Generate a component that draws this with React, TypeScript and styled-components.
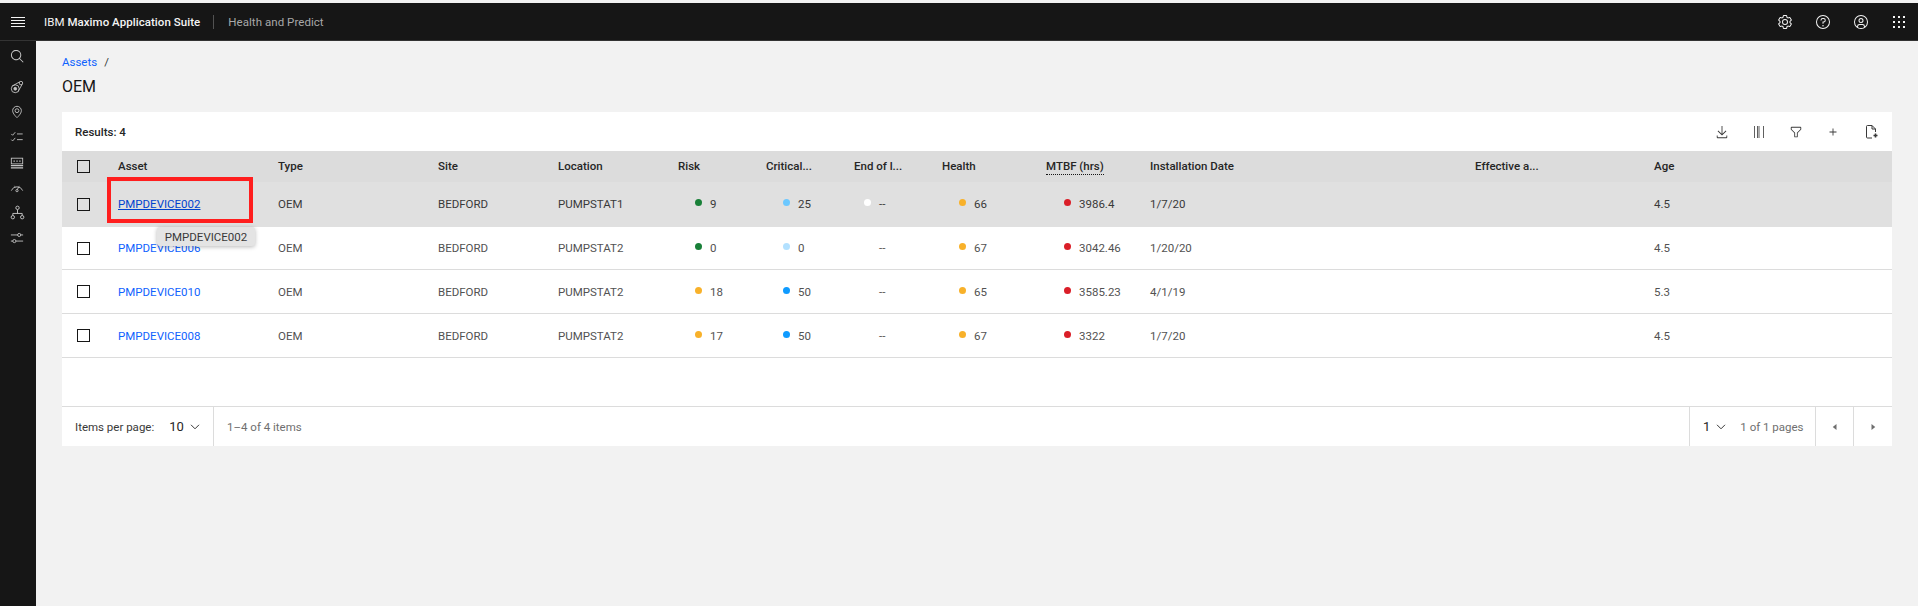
import React from "react";
import styled, { createGlobalStyle } from "styled-components";

const GlobalStyle = createGlobalStyle`
  html, body {
    margin: 0;
    padding: 0;
    background: #f2f2f2;
    font-family: Roboto, "Liberation Sans", sans-serif;
    font-size: 11.5px;
    color: #161616;
    overflow: hidden;
  }
`;

const COLUMNS = "56px 160px 160px 120px 120px 88px 88px 88px 104px 104px 325px 179px 238px";

const Page = styled.div`
  width: 1918px;
  height: 606px;
  display: flex;
  flex-direction: column;
  padding-top: 3px;
  box-sizing: border-box;
  background: #f2f2f2;
  overflow: hidden;
`;

const Header = styled.header`
  height: 38px;
  flex: none;
  display: flex;
  align-items: center;
  background: #161616;
  border-bottom: 1px solid #333;
  box-sizing: border-box;
  color: #f4f4f4;
`;

const MenuButton = styled.button`
  width: 36px;
  height: 36px;
  padding: 0;
  margin-right: 8px;
  display: flex;
  align-items: center;
  justify-content: center;
  background: none;
  border: 0;
  color: #f4f4f4;
`;

const Brand = styled.div`
  color: #f4f4f4;
  font-weight: 400;
  letter-spacing: 0.05px;
  padding-right: 13px;
  border-right: 1px solid #525252;
  line-height: 14px;

  b {
    font-weight: 500;
  }
`;

const Product = styled.div`
  margin-left: 14px;
  letter-spacing: 0.05px;
  color: #a8a8a8;
`;

const HeaderIcons = styled.div`
  margin-left: auto;
  display: grid;
  grid-template-columns: repeat(4, 38px);
`;

const HeaderIcon = styled.div`
  height: 36px;
  display: flex;
  align-items: center;
  justify-content: center;
  color: #f4f4f4;
`;

const Body = styled.div`
  flex: 1;
  display: flex;
  min-height: 0;
`;

const Rail = styled.nav`
  width: 36px;
  flex: none;
  background: #161616;
  display: flex;
  flex-direction: column;
  align-items: center;
  padding-top: 3.4px;
  box-sizing: border-box;
`;

const RailItem = styled.div`
  width: 36px;
  height: 25.2px;
  display: flex;
  align-items: center;
  justify-content: center;
  padding-right: 2px;
  box-sizing: border-box;
  color: #c6c6c6;

  &:first-child {
    margin-bottom: 4.8px;
  }
`;

const Main = styled.main`
  flex: 1;
  padding: 12px 26px 0;
  min-width: 0;
`;

const Breadcrumb = styled.div`
  height: 18px;
  display: flex;
  align-items: center;
  gap: 7px;
  color: #393939;
`;

const Crumb = styled.a`
  color: #0f62fe;
`;

const Title = styled.h1`
  margin: 3px 0 0;
  height: 25px;
  font-size: 16px;
  line-height: 25px;
  font-weight: 400;
  color: #161616;
`;

const Card = styled.section`
  margin-top: 13px;
  width: 1830px;
  background: #fff;
`;

const Toolbar = styled.div`
  height: 39px;
  display: flex;
  align-items: center;
  justify-content: space-between;
  padding: 0 0 0 13px;
`;

const Results = styled.div`
  font-weight: 500;
  color: #262626;
`;

const ToolActions = styled.div`
  display: grid;
  grid-template-columns: repeat(4, 37px) 41px;
`;

const ToolButton = styled.div`
  height: 37px;
  display: flex;
  align-items: center;
  justify-content: center;
  color: #393939;
`;

const HeadRow = styled.div`
  display: grid;
  grid-template-columns: ${COLUMNS};
  height: 31px;
  box-sizing: border-box;
  padding-bottom: 1px;
  align-items: center;
  background: #dcdcdc;
  font-weight: 500;
  color: #262626;
`;

const HeadCell = styled.div`
  white-space: nowrap;
`;

const Underlined = styled.span`
  border-bottom: 1px dotted #161616;
  padding-bottom: 1px;
`;

const Row = styled.div<{ $active?: boolean }>`
  display: grid;
  grid-template-columns: ${COLUMNS};
  height: 44px;
  box-sizing: border-box;
  align-items: center;
  background: ${(p) => (p.$active ? "#e0e0e0" : "#fff")};
  color: ${(p) => (p.$active ? "#393939" : "#525252")};
  border-bottom: 1px solid ${(p) => (p.$active ? "#e0e0e0" : "#dcdcdc")};

  &:nth-child(2) {
    height: 45px;
  }
  &:nth-child(3) {
    height: 43px;
  }
`;

const Cell = styled.div`
  position: relative;
  white-space: nowrap;
`;

const CheckCell = styled.div`
  padding-left: 15px;
  display: flex;
  align-items: center;
`;

const Check = styled.span`
  display: block;
  width: 13px;
  height: 13px;
  box-sizing: border-box;
  border: 1px solid #161616;
  background: transparent;
`;

const AssetLink = styled.a<{ $active?: boolean }>`
  color: ${(p) => (p.$active ? "#0043ce" : "#0f62fe")};
  text-decoration: ${(p) => (p.$active ? "underline" : "none")};
`;

const Callout = styled.div`
  position: absolute;
  left: -11px;
  top: -20px;
  width: 146px;
  height: 46px;
  box-sizing: border-box;
  border: 4px solid #ff1e1e;
`;

const Tooltip = styled.div`
  position: absolute;
  left: 39px;
  top: 30px;
  width: 98px;
  height: 19px;
  box-sizing: border-box;
  display: flex;
  align-items: center;
  justify-content: center;
  background: #e4e4e4;
  border-radius: 3px;
  box-shadow: 0 1px 4px rgba(0, 0, 0, 0.28);
  color: #393939;
  z-index: 2;
`;

const Metric = styled.div<{ $offset: number }>`
  display: flex;
  align-items: center;
  padding-left: ${(p) => p.$offset}px;
`;

const Dot = styled.span<{ $color?: string }>`
  width: 7px;
  height: 7px;
  margin-right: 8px;
  margin-top: -3px;
  border-radius: 50%;
  background: ${(p) => p.$color || "transparent"};
  flex: none;
`;

const Spacer = styled.div`
  height: 48px;
`;

const Footer = styled.div`
  height: 39px;
  display: flex;
  align-items: stretch;
  border-top: 1px solid #dcdcdc;
  color: #393939;
  white-space: nowrap;
`;

const FooterGroup = styled.div<{ $width?: number; $grow?: boolean; $muted?: boolean; $center?: boolean }>`
  display: flex;
  align-items: center;
  box-sizing: border-box;
  flex: ${(p) => (p.$grow ? "1" : "none")};
  width: ${(p) => (p.$width ? `${p.$width}px` : "auto")};
  padding: ${(p) => (p.$center ? "0" : "0 0 0 13px")};
  justify-content: ${(p) => (p.$center ? "center" : "flex-start")};
  color: ${(p) => (p.$muted ? "#6f6f6f" : "inherit")};
  border-left: 1px solid #dcdcdc;

  &:first-child {
    border-left: 0;
  }
`;

const PageSize = styled.span<{ $gap?: number }>`
  margin-left: ${(p) => p.$gap ?? 0}px;
  font-size: 13px;
  color: #262626;
`;

const FooterMuted = styled.span`
  color: #6f6f6f;
  margin-left: 14px;
`;

const Chevron = styled.svg`
  margin-left: 6px;
  color: #393939;
`;

type IconProps = { size?: number; children: React.ReactNode };

const Carbon = ({ size = 16, children }: IconProps) => (
  <svg width={size} height={size} viewBox="0 0 32 32" fill="currentColor">
    {children}
  </svg>
);

const Line = ({ size = 16, children }: IconProps) => (
  <svg width={size} height={size} viewBox="0 0 16 16" fill="none" stroke="currentColor" strokeWidth="1">
    {children}
  </svg>
);

const MenuIcon = () => (
  <svg width="14" height="10" viewBox="0 0 14 10" fill="currentColor">
    <rect y="0" width="14" height="1" />
    <rect y="3" width="14" height="1" />
    <rect y="6" width="14" height="1" />
    <rect y="9" width="14" height="1" />
  </svg>
);

const GearIcon = () => (
  <Carbon>
    <path d="M27,16.76c0-.25,0-.5,0-.76s0-.51,0-.77l1.92-1.68A2,2,0,0,0,29.3,11L26.94,7a2,2,0,0,0-1.73-1,2,2,0,0,0-.64.1l-2.43.82a11.35,11.35,0,0,0-1.31-.75l-.51-2.52a2,2,0,0,0-2-1.61H13.64a2,2,0,0,0-2,1.61l-.51,2.52a11.48,11.48,0,0,0-1.32.75L7.43,6.06A2,2,0,0,0,6.79,6,2,2,0,0,0,5.06,7L2.7,11a2,2,0,0,0,.41,2.51L5,15.24c0,.25,0,.5,0,.76s0,.51,0,.77L3.11,18.45A2,2,0,0,0,2.7,21L5.06,25a2,2,0,0,0,1.73,1,2,2,0,0,0,.64-.1l2.43-.82a11.35,11.35,0,0,0,1.31.75l.51,2.52a2,2,0,0,0,2,1.61h4.72a2,2,0,0,0,2-1.61l.51-2.52a11.48,11.48,0,0,0,1.32-.75l2.42.82a2,2,0,0,0,.64.1,2,2,0,0,0,1.73-1L29.3,21a2,2,0,0,0-.41-2.51ZM25.21,24l-3.43-1.16a8.86,8.86,0,0,1-2.71,1.57L18.36,28H13.64l-.71-3.55a9.36,9.36,0,0,1-2.7-1.57L6.79,24,4.43,20l2.72-2.4a8.9,8.9,0,0,1,0-3.13L4.43,12,6.79,8l3.43,1.16a8.86,8.86,0,0,1,2.71-1.57L13.64,4h4.72l.71,3.55a9.36,9.36,0,0,1,2.7,1.57L25.21,8,27.57,12l-2.72,2.4a8.9,8.9,0,0,1,0,3.13L27.57,20Z" />
    <path d="M16,22a6,6,0,1,1,6-6A5.94,5.94,0,0,1,16,22Zm0-10a3.91,3.91,0,0,0-4,4,3.91,3.91,0,0,0,4,4,3.91,3.91,0,0,0,4-4A3.91,3.91,0,0,0,16,12Z" />
  </Carbon>
);

const HelpIcon = () => (
  <Carbon>
    <path d="M16,2A14,14,0,1,0,30,16,14,14,0,0,0,16,2Zm0,26A12,12,0,1,1,28,16,12,12,0,0,1,16,28Z" />
    <circle cx="16" cy="23.5" r="1.5" />
    <path d="M17,8H15.5A4.49,4.49,0,0,0,11,12.5V13h2v-.5A2.5,2.5,0,0,1,15.5,10H17a2.5,2.5,0,0,1,0,5H15v4.5h2V17a4.5,4.5,0,0,0,0-9Z" />
  </Carbon>
);

const UserIcon = () => (
  <Carbon>
    <path d="M16,8a5,5,0,1,0,5,5A5,5,0,0,0,16,8Zm0,8a3,3,0,1,1,3-3A3.0034,3.0034,0,0,1,16,16Z" />
    <path d="M16,2A14,14,0,1,0,30,16,14.0158,14.0158,0,0,0,16,2ZM10,26.3765V25a3.0033,3.0033,0,0,1,3-3h6a3.0033,3.0033,0,0,1,3,3v1.3765a11.8989,11.8989,0,0,1-12,0Zm13.9925-1.4507A5.0016,5.0016,0,0,0,19,20H13a5.0016,5.0016,0,0,0-4.9925,4.9258,12,12,0,1,1,15.985,0Z" />
  </Carbon>
);

const SwitcherIcon = () => (
  <svg width="12" height="12" viewBox="0 0 12 12" fill="currentColor">
    {[0, 5, 10].map((y) =>
      [0, 5, 10].map((x) => <rect key={`${x}-${y}`} x={x} y={y} width="2" height="2" />)
    )}
  </svg>
);

const SearchIcon = () => (
  <Carbon size={15}>
    <path d="M29,27.5859l-7.5521-7.5521a11.0177,11.0177,0,1,0-1.4141,1.4141L27.5859,29ZM4,13a9,9,0,1,1,9,9A9.01,9.01,0,0,1,4,13Z" />
  </Carbon>
);

const AssetIcon = () => (
  <Line size={14}>
    <circle cx="6" cy="10" r="4.5" />
    <circle cx="6" cy="10" r="1.6" fill="currentColor" />
    <circle cx="12.5" cy="3.5" r="2" />
    <path d="M2.8 6.8L10.9 2.2M9.2 13.2L13.8 5.1" />
  </Line>
);

const PinIcon = () => (
  <Line size={14}>
    <path d="M8 1.5a5 5 0 0 0-5 5C3 10 8 14.5 8 14.5s5-4.5 5-8a5 5 0 0 0-5-5z" />
    <circle cx="8" cy="6.5" r="2.2" />
  </Line>
);

const TasksIcon = () => (
  <Line size={14}>
    <path d="M1.5 4.5l1.5 1.5 3-3.5M1.5 11l1.5 1.5 3-3.5M8 4.5h6.5M8 11h6.5" />
  </Line>
);

const TableIcon = () => (
  <Line size={14}>
    <rect x="1.5" y="2.5" width="13" height="6.5" />
    <path d="M4 5.8h1.5M7.3 5.8h1.5M10.6 5.8h1.5" strokeWidth="1.5" />
    <path d="M1 11h14M1 13.5h14" strokeWidth="1.5" />
  </Line>
);

const GaugeIcon = () => (
  <Line size={14}>
    <path d="M1.5 11a7 7 0 0 1 13 0" />
    <path d="M5.2 5.6l.5 1M10.6 5.6l-.5 1" />
    <circle cx="8" cy="11" r="1.3" />
    <path d="M8.5 9.8l1.3-3" />
  </Line>
);

const TreeIcon = () => (
  <Line size={15}>
    <circle cx="8" cy="3" r="1.8" />
    <circle cx="3" cy="13" r="1.8" />
    <circle cx="13" cy="13" r="1.8" />
    <path d="M8 5v4M3 11V9h10v2" />
  </Line>
);

const SlidersIcon = () => (
  <Line size={14}>
    <path d="M1 4.5h14M1 11.5h14" />
    <circle cx="10.5" cy="4.5" r="1.8" fill="#161616" />
    <circle cx="5" cy="11.5" r="1.8" fill="#161616" />
  </Line>
);

const DownloadIcon = () => (
  <Carbon size={14}>
    <path d="M26 24v4H6V24H4v4H4a2 2 0 002 2H26a2 2 0 002-2h0V24zM26 14L24.59 12.59 17 20.17 17 2 15 2 15 20.17 7.41 12.59 6 14 16 24 26 14z" />
  </Carbon>
);

const ColumnsIcon = () => (
  <svg width="10" height="12" viewBox="0 0 10 12" fill="currentColor" opacity="0.8">
    <rect x="0" y="0" width="1" height="12" />
    <rect x="3" y="0" width="1" height="12" />
    <rect x="4.5" y="0" width="1" height="12" />
    <rect x="9" y="0" width="1" height="12" />
  </svg>
);

const FilterIcon = () => (
  <Carbon size={14}>
    <path d="M18,28H14a2,2,0,0,1-2-2V18.41L4.59,11A2,2,0,0,1,4,9.59V6A2,2,0,0,1,6,4H26a2,2,0,0,1,2,2V9.59A2,2,0,0,1,27.41,11L20,18.41V26A2,2,0,0,1,18,28ZM6,6V9.59l8,8V26h4V17.59l8-8V6Z" />
  </Carbon>
);

const AddIcon = () => (
  <Carbon size={14}>
    <path d="M17 15 17 8 15 8 15 15 8 15 8 17 15 17 15 24 17 24 17 17 24 17 24 15z" />
  </Carbon>
);

const DocumentAddIcon = () => (
  <svg width="12" height="14" viewBox="0 0 12 14" fill="none" stroke="currentColor" strokeWidth="1">
    <path d="M6 13H1.5a1 1 0 0 1-1-1V1.5a1 1 0 0 1 1-1H6L9.5 4v3" />
    <path d="M6 .5V4h3.5" />
    <path d="M9.5 8.5v4M7.5 10.5h4" strokeWidth="1.6" />
  </svg>
);

const ChevronDown = () => (
  <Chevron width="10" height="6" viewBox="0 0 10 6" fill="none" stroke="currentColor" strokeWidth="1">
    <path d="M1 .8L5 4.8 9 .8" />
  </Chevron>
);

const CaretLeft = () => (
  <Carbon size={12}>
    <path d="M20 24 10 16 20 8z" />
  </Carbon>
);

const CaretRight = () => (
  <Carbon size={12}>
    <path d="M12 8 22 16 12 24z" />
  </Carbon>
);

const GREEN = "#198038";
const ORANGE = "#f8b12a";
const RED = "#da1e28";
const BLUE = "#0f9bff";
const SKY = "#6cc8ff";
const PALE = "#b3e1ff";

type Asset = {
  name: string;
  location: string;
  risk: [string, string];
  criticality: [string, string];
  eol?: string;
  health: [string, string];
  mtbf: string;
  installed: string;
  age: string;
};

const assets: Asset[] = [
  { name: "PMPDEVICE002", location: "PUMPSTAT1", risk: [GREEN, "9"], criticality: [SKY, "25"], eol: "#fff", health: [ORANGE, "66"], mtbf: "3986.4", installed: "1/7/20", age: "4.5" },
  { name: "PMPDEVICE006", location: "PUMPSTAT2", risk: [GREEN, "0"], criticality: [PALE, "0"], health: [ORANGE, "67"], mtbf: "3042.46", installed: "1/20/20", age: "4.5" },
  { name: "PMPDEVICE010", location: "PUMPSTAT2", risk: [ORANGE, "18"], criticality: [BLUE, "50"], health: [ORANGE, "65"], mtbf: "3585.23", installed: "4/1/19", age: "5.3" },
  { name: "PMPDEVICE008", location: "PUMPSTAT2", risk: [ORANGE, "17"], criticality: [BLUE, "50"], health: [ORANGE, "67"], mtbf: "3322", installed: "1/7/20", age: "4.5" },
];

const railIcons = [SearchIcon, AssetIcon, PinIcon, TasksIcon, TableIcon, GaugeIcon, TreeIcon, SlidersIcon];
const toolIcons = [DownloadIcon, ColumnsIcon, FilterIcon, AddIcon, DocumentAddIcon];
const headerIcons = [GearIcon, HelpIcon, UserIcon, SwitcherIcon];

export default function App() {
  return (
    <Page>
      <GlobalStyle />
      <Header>
        <MenuButton>
          <MenuIcon />
        </MenuButton>
        <Brand>
          IBM <b>Maximo Application Suite</b>
        </Brand>
        <Product>Health and Predict</Product>
        <HeaderIcons>
          {headerIcons.map((Icon, i) => (
            <HeaderIcon key={i}>
              <Icon />
            </HeaderIcon>
          ))}
        </HeaderIcons>
      </Header>
      <Body>
        <Rail>
          {railIcons.map((Icon, i) => (
            <RailItem key={i}>
              <Icon />
            </RailItem>
          ))}
        </Rail>
        <Main>
          <Breadcrumb>
            <Crumb>Assets</Crumb>
            <span>/</span>
          </Breadcrumb>
          <Title>OEM</Title>
          <Card>
            <Toolbar>
              <Results>Results: 4</Results>
              <ToolActions>
                {toolIcons.map((Icon, i) => (
                  <ToolButton key={i}>
                    <Icon />
                  </ToolButton>
                ))}
              </ToolActions>
            </Toolbar>
            <div>
              <HeadRow>
                <CheckCell>
                  <Check />
                </CheckCell>
                <HeadCell>Asset</HeadCell>
                <HeadCell>Type</HeadCell>
                <HeadCell>Site</HeadCell>
                <HeadCell>Location</HeadCell>
                <HeadCell>Risk</HeadCell>
                <HeadCell>Critical...</HeadCell>
                <HeadCell>End of l...</HeadCell>
                <HeadCell>Health</HeadCell>
                <HeadCell>
                  <Underlined>MTBF (hrs)</Underlined>
                </HeadCell>
                <HeadCell>Installation Date</HeadCell>
                <HeadCell>Effective a...</HeadCell>
                <HeadCell>Age</HeadCell>
              </HeadRow>
              {assets.map((a, i) => (
                <Row key={a.name} $active={i === 0}>
                  <CheckCell>
                    <Check />
                  </CheckCell>
                  <Cell>
                    <AssetLink $active={i === 0}>{a.name}</AssetLink>
                    {i === 0 && (
                      <>
                        <Callout />
                        <Tooltip>{a.name}</Tooltip>
                      </>
                    )}
                  </Cell>
                  <Cell>OEM</Cell>
                  <Cell>BEDFORD</Cell>
                  <Cell>{a.location}</Cell>
                  <Metric $offset={17}>
                    <Dot $color={a.risk[0]} />
                    {a.risk[1]}
                  </Metric>
                  <Metric $offset={17}>
                    <Dot $color={a.criticality[0]} />
                    {a.criticality[1]}
                  </Metric>
                  <Metric $offset={10}>
                    <Dot $color={a.eol} />
                    --
                  </Metric>
                  <Metric $offset={17}>
                    <Dot $color={a.health[0]} />
                    {a.health[1]}
                  </Metric>
                  <Metric $offset={18}>
                    <Dot $color={RED} />
                    {a.mtbf}
                  </Metric>
                  <Cell>{a.installed}</Cell>
                  <Cell />
                  <Cell>{a.age}</Cell>
                </Row>
              ))}
            </div>
            <Spacer />
            <Footer>
              <FooterGroup $width={151}>
                Items per page:
                <PageSize $gap={15}>10</PageSize>
                <ChevronDown />
              </FooterGroup>
              <FooterGroup $grow $muted>
                1–4 of 4 items
              </FooterGroup>
              <FooterGroup $width={126}>
                <PageSize>1</PageSize>
                <ChevronDown />
                <FooterMuted>1 of 1 pages</FooterMuted>
              </FooterGroup>
              <FooterGroup $width={38} $center $muted>
                <CaretLeft />
              </FooterGroup>
              <FooterGroup $width={39} $center $muted>
                <CaretRight />
              </FooterGroup>
            </Footer>
          </Card>
        </Main>
      </Body>
    </Page>
  );
}
